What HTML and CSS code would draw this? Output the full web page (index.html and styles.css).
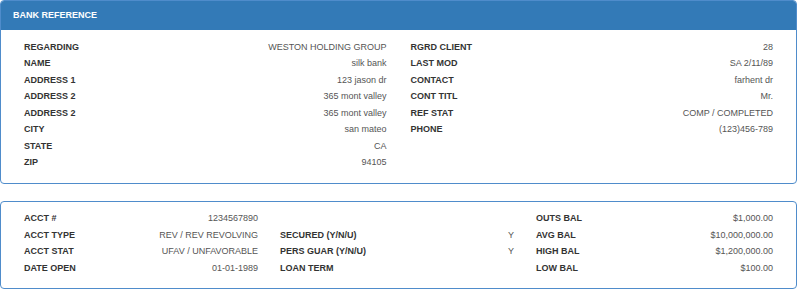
FILE: index.html
```html
<!DOCTYPE html>
<html lang="en">
<head>
    <meta charset="UTF-8">
    <title>Bank Reference</title>
    <link rel="stylesheet" href="styles.css">
</head>
<body>
    <div class="panel">
        <div class="panel-heading">BANK REFERENCE</div>
        <div class="panel-body cols-2">
            <div class="field-list">
                <div class="field"><span class="lbl">REGARDING</span><span class="val">WESTON HOLDING GROUP</span></div>
                <div class="field"><span class="lbl">NAME</span><span class="val">silk bank</span></div>
                <div class="field"><span class="lbl">ADDRESS 1</span><span class="val">123 jason dr</span></div>
                <div class="field"><span class="lbl">ADDRESS 2</span><span class="val">365 mont valley</span></div>
                <div class="field"><span class="lbl">ADDRESS 2</span><span class="val">365 mont valley</span></div>
                <div class="field"><span class="lbl">CITY</span><span class="val">san mateo</span></div>
                <div class="field"><span class="lbl">STATE</span><span class="val">CA</span></div>
                <div class="field"><span class="lbl">ZIP</span><span class="val">94105</span></div>
            </div>
            <div class="field-list">
                <div class="field"><span class="lbl">RGRD CLIENT</span><span class="val">28</span></div>
                <div class="field"><span class="lbl">LAST MOD</span><span class="val">SA 2/11/89</span></div>
                <div class="field"><span class="lbl">CONTACT</span><span class="val">farhent dr</span></div>
                <div class="field"><span class="lbl">CONT TITL</span><span class="val">Mr.</span></div>
                <div class="field"><span class="lbl">REF STAT</span><span class="val">COMP / COMPLETED</span></div>
                <div class="field"><span class="lbl">PHONE</span><span class="val">(123)456-789</span></div>
            </div>
        </div>
    </div>

    <div class="panel">
        <div class="panel-body cols-3">
            <div class="field-list">
                <div class="field"><span class="lbl">ACCT #</span><span class="val">1234567890</span></div>
                <div class="field"><span class="lbl">ACCT TYPE</span><span class="val">REV / REV REVOLVING</span></div>
                <div class="field"><span class="lbl">ACCT STAT</span><span class="val">UFAV / UNFAVORABLE</span></div>
                <div class="field"><span class="lbl">DATE OPEN</span><span class="val">01-01-1989</span></div>
            </div>
            <div class="field-list">
                <div class="field"><span class="lbl"></span><span class="val"></span></div>
                <div class="field"><span class="lbl">SECURED (Y/N/U)</span><span class="val">Y</span></div>
                <div class="field"><span class="lbl">PERS GUAR (Y/N/U)</span><span class="val">Y</span></div>
                <div class="field"><span class="lbl">LOAN TERM</span><span class="val"></span></div>
            </div>
            <div class="field-list">
                <div class="field"><span class="lbl">OUTS BAL</span><span class="val">$1,000.00</span></div>
                <div class="field"><span class="lbl">AVG BAL</span><span class="val">$10,000,000.00</span></div>
                <div class="field"><span class="lbl">HIGH BAL</span><span class="val">$1,200,000.00</span></div>
                <div class="field"><span class="lbl">LOW BAL</span><span class="val">$100.00</span></div>
            </div>
        </div>
    </div>
</body>
</html>
```

FILE: styles.css
```css
/* base */
body {
    margin: 0;
    background-color: #fff;
    font-family: "Liberation Sans", Arial, sans-serif;
    font-size: 9px;
    color: #555;
}

/* panels */
.panel {
    border: 1px solid #4f8ccb;
    border-radius: 4px;
    margin-bottom: 17px;
    overflow: hidden;
}

.panel:last-child {
    margin-bottom: 0;
}

.panel-heading {
    background-color: #337ab7;
    color: #fff;
    font-weight: bold;
    height: 29px;
    line-height: 29px;
    padding-left: 12px;
}

.panel-body {
    display: grid;
    column-gap: 24px;
    padding: 8px 23px 12px 23px;
}

.panel-heading + .panel-body {
    padding-top: 9px;
    padding-bottom: 13px;
}

.cols-2 {
    grid-template-columns: 1fr 1fr;
}

.cols-3 {
    grid-template-columns: 234px 234px 1fr;
    column-gap: 22px;
}

/* label / value rows */
.field {
    display: flex;
    justify-content: space-between;
    height: 16.43px;
    line-height: 16.43px;
}

.lbl {
    font-weight: bold;
    color: #333;
}

.val {
    text-align: right;
}
```
